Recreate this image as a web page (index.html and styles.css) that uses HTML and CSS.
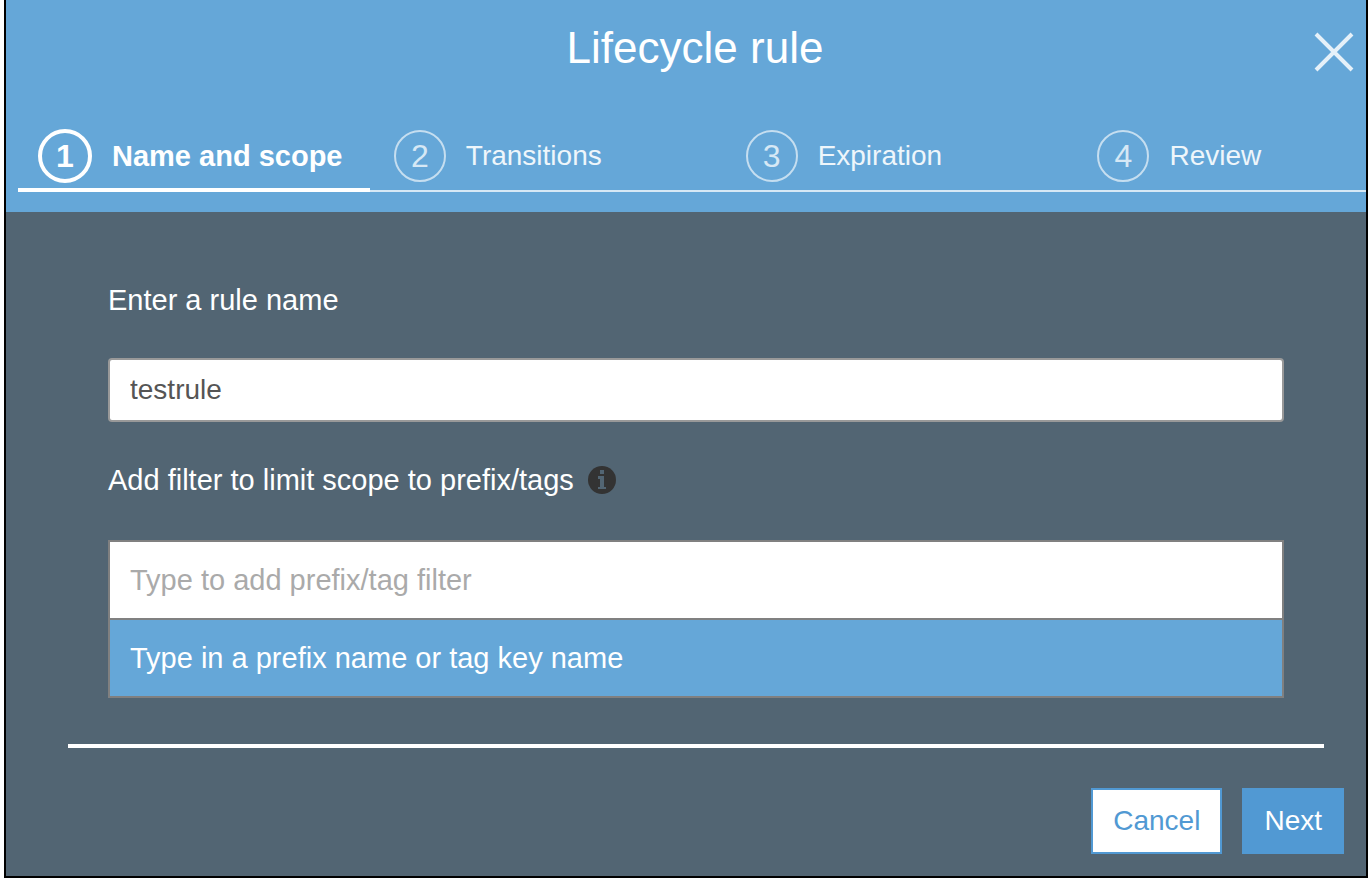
FILE: index.html
```html
<!DOCTYPE html>
<html lang="en">
<head>
<meta charset="utf-8">
<title>Lifecycle rule</title>
<link rel="stylesheet" href="styles.css">
</head>
<body>
<main class="dialog">
  <header class="header">
    <div class="title-bar">
      <h1 class="title">Lifecycle rule</h1>
      <button class="close" type="button" aria-label="Close">
        <svg class="close-icon" viewBox="0 0 40 40" aria-hidden="true"><path d="M2 2 38 38M38 2 2 38"/></svg>
      </button>
    </div>
    <ol class="steps">
      <li class="step active" aria-current="step"><span class="number">1</span><span>Name and scope</span></li>
      <li class="step"><span class="number">2</span><span>Transitions</span></li>
      <li class="step"><span class="number">3</span><span>Expiration</span></li>
      <li class="step"><span class="number">4</span><span>Review</span></li>
    </ol>
  </header>
  <form class="form">
    <div class="fields">
      <label class="label" for="rule-name">Enter a rule name</label>
      <input class="input" id="rule-name" type="text" value="testrule">
      <div class="label-row">
        <label class="label" for="filter">Add filter to limit scope to prefix/tags</label>
        <svg class="info" viewBox="0 0 28 28" role="img" aria-label="Information">
          <circle class="info-disc" cx="14" cy="14" r="14"/>
          <path class="info-mark" d="M12 4h4v4h-4zM10 10h6v11h2v2h-8v-2h2v-8h-2z"/>
        </svg>
      </div>
      <input class="input filter" id="filter" type="text" placeholder="Type to add prefix/tag filter">
      <ul class="hints"><li class="hint">Type in a prefix name or tag key name</li></ul>
    </div>
    <hr class="divider">
    <div class="actions">
      <button class="button cancel" type="button">Cancel</button>
      <button class="button next" type="submit">Next</button>
    </div>
  </form>
</main>
</body>
</html>
```
FILE: styles.css
```css
* {
  box-sizing: border-box;
}

body {
  margin: 0;
  background: #fff;
  color: #fff;
  font: 28px/32px "Liberation Sans", Arial, sans-serif;
}

.dialog {
  margin: 0 4px 8px;
  border: 2px solid #000;
  border-top: 0;
  background: #526573;
}

.header {
  padding: 24px 0 20px 12px;
  background: #65a7d8;
}

.title-bar {
  display: grid;
  grid-template-columns: 64px 1fr 52px;
  align-items: center;
  padding-right: 6px;
}

.title {
  grid-column: 2;
  margin: 0;
  font-size: 44px;
  line-height: 48px;
  font-weight: 400;
  text-align: center;
}

.close {
  display: flex;
  justify-content: center;
  padding: 8px 0 0;
  border: 0;
  background: none;
}

.close-icon {
  width: 40px;
  height: 40px;
  fill: none;
  stroke: #e6f1f9;
  stroke-width: 4;
}

.steps {
  display: flex;
  margin: 56px 0 0;
  padding: 0;
  overflow: hidden;
  list-style: none;
  box-shadow: inset 0 -2px #d6e8f5;
}

.step {
  display: flex;
  flex: 0 0 26.1%;
  align-items: center;
  gap: 20px;
  height: 64px;
  padding: 0 0 9px 24px;
  color: #eef6fb;
}

.active {
  padding-left: 20px;
  border-bottom: 4px solid #fff;
  padding-bottom: 5px;
  color: #fff;
  font-size: 29px;
  font-weight: 700;
}

.number {
  display: flex;
  align-items: center;
  justify-content: center;
  width: 52px;
  height: 52px;
  border: 2px solid #c5def0;
  border-radius: 50%;
  color: #d6e8f5;
  font-size: 32px;
}

.active .number {
  width: 54px;
  height: 54px;
  border: 4px solid #fff;
  color: #fff;
}

.form {
  padding: 72px 22px 22px 62px;
}

.fields {
  display: flex;
  flex-direction: column;
  padding: 0 60px 0 40px;
}

.label {
  font-size: 29px;
}

.label-row {
  display: flex;
  align-items: center;
  gap: 14px;
  margin-top: 42px;
}

.info {
  width: 28px;
  height: 28px;
}

.info-disc {
  fill: #333;
}

.info-mark {
  fill: #526573;
}

.input {
  width: 100%;
  height: 64px;
  margin-top: 42px;
  padding: 0 20px;
  border: 2px solid #999;
  border-radius: 4px;
  background: #fff;
  color: #555;
  font: inherit;
}

.filter {
  height: 80px;
  margin-top: 44px;
  border-color: #808080;
  border-radius: 0;
  font-size: 29px;
}

.filter::placeholder {
  color: #aaa;
  opacity: 1;
}

.hints {
  margin: 0;
  padding: 0;
  border: 2px solid #808080;
  border-top: 0;
  background: #65a7d8;
  font-size: 29px;
  list-style: none;
}

.hint {
  padding: 22px 20px;
}

.divider {
  height: 4px;
  margin: 46px 20px 0 0;
  border: 0;
  background: #fff;
}

.actions {
  display: flex;
  justify-content: flex-end;
  gap: 20px;
  margin-top: 40px;
}

.button {
  padding: 15px 20px;
  border: 2px solid #5199d3;
  background: #5199d3;
  color: #fff;
  font: inherit;
}

.cancel {
  background: #fff;
  color: #5199d3;
}
```
